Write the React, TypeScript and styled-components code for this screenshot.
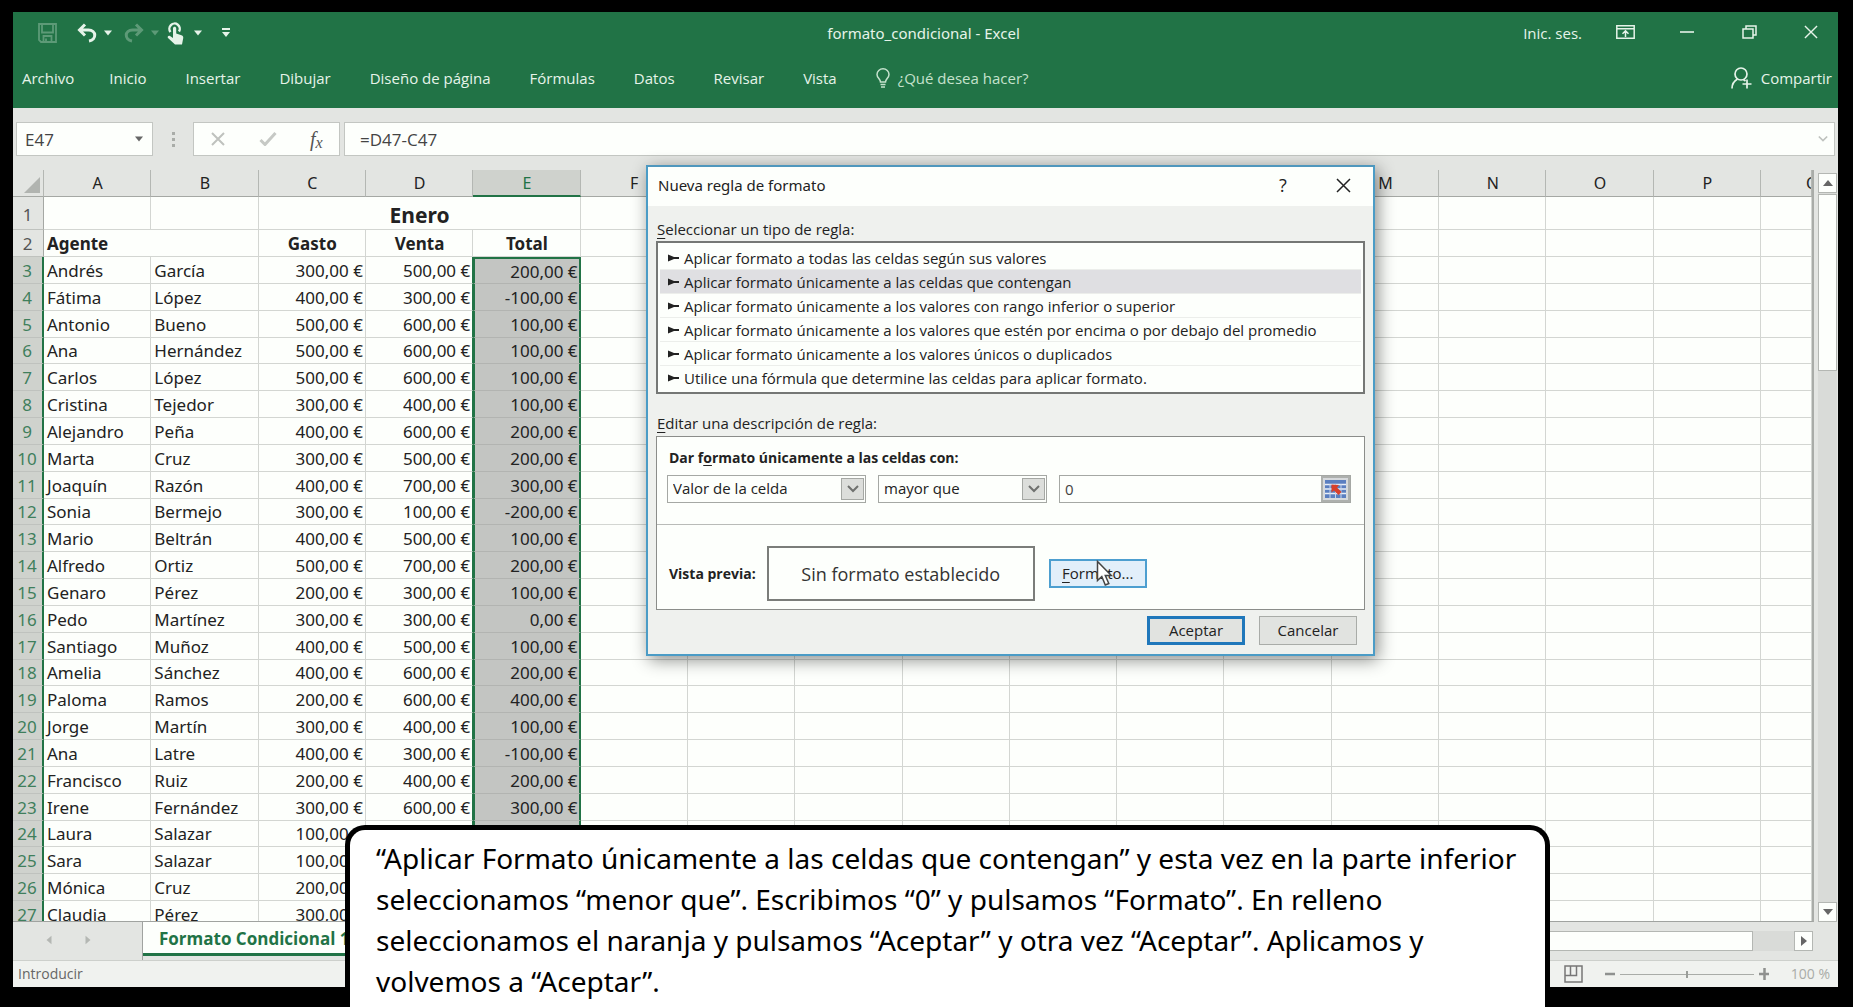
import React from "react";
import styled, { createGlobalStyle, css } from "styled-components";

const GREEN = "#217346";
const CHROME = "#e3e5e2";
const PAPER = "#fdfffc";
const GRID_LINE = "#d3d6d2";
const SANS = `"Open Sans", "Noto Sans", sans-serif`;
const HUMANIST = `"Noto Sans", "Open Sans", sans-serif`;

const GlobalStyle = createGlobalStyle`
  *, *::before, *::after { box-sizing: border-box; }
  body { margin: 0; background: #000; overflow: hidden; }
  button, input, select { font: inherit; color: inherit; margin: 0; }
`;

/* ---------- window ---------- */

const Page = styled.div`
  position: relative;
  height: 100vh;
  padding: 12px 15px 20px 13px;
  background: #000;
  font: 15px/20px ${SANS};
  color: #333;
`;

const Window = styled.main`
  height: 100%;
  display: flex;
  flex-direction: column;
  overflow: hidden;
  background: ${CHROME};
`;

const PlainButton = styled.button`
  display: flex;
  align-items: center;
  justify-content: center;
  padding: 0;
  border: 0;
  background: none;
`;

/* ---------- green header ---------- */

const Header = styled.header`
  flex: none;
  background: ${GREEN};
  color: #e6f3e9;
  padding-bottom: 4px;
`;

const TitleBar = styled.div`
  display: grid;
  grid-template-columns: 1fr auto 1fr;
  align-items: center;
  height: 42px;
`;

const QuickAccess = styled.div`
  display: flex;
  align-items: center;
  padding-left: 25px;
`;

const QuickButton = styled(PlainButton)<{ $faded?: boolean; $gap: number }>`
  height: 24px;
  margin-right: ${(p) => p.$gap}px;
  opacity: ${(p) => (p.$faded ? 0.3 : 1)};
`;

const Title = styled.h1`
  margin: 0;
  padding-right: 4px;
  font-family: ${HUMANIST};
  font-size: 15px;
  font-weight: 400;
`;

const WindowControls = styled.div`
  display: flex;
  justify-content: flex-end;
  align-items: center;
  gap: 8px;
`;

const SignIn = styled(PlainButton)`
  margin-right: 8px;
`;

const ControlButton = styled(PlainButton)`
  width: 54px;
  height: 42px;
  padding-bottom: 2px;
`;

const RibbonBar = styled.nav`
  display: flex;
  align-items: center;
  height: 50px;
  padding: 0 6px 2px 9px;
`;

const Tab = styled(PlainButton)`
  padding: 0 20px 0 19px;
  &:first-child {
    padding: 0 16px 0 0;
  }
`;

const TellMe = styled(PlainButton)`
  padding-left: 19px;
  gap: 8px;
  color: #c5e2cd;
`;

const Share = styled(PlainButton)`
  margin-left: auto;
  gap: 9px;
`;

/* ---------- formula bar ---------- */

const FormulaBar = styled.div`
  flex: none;
  display: flex;
  align-items: center;
  padding: 14px 3px;
  font-size: 17px;
`;

const Framed = styled.div`
  display: flex;
  align-items: center;
  height: 34px;
  background: ${PAPER};
  border: 1px solid #c3c6c2;
`;

const NameBox = styled(Framed)`
  width: 137px;
  padding: 0 8px;
  color: #666;
`;

const BareInput = styled.input`
  flex: 1;
  min-width: 0;
  height: 100%;
  padding: 0;
  border: 0;
  outline: 0;
  background: none;
  color: #444;
`;

const Dots = styled.div`
  width: 40px;
  display: flex;
  flex-direction: column;
  align-items: center;
  gap: 3px;
  &::before,
  &::after,
  span {
    content: "";
    width: 3px;
    height: 3px;
    background: #a9aca8;
  }
`;

const FormulaButtons = styled(Framed)`
  width: 147px;
  margin-right: 4px;
  justify-content: space-around;
`;

const FxButton = styled(PlainButton)`
  font: italic 20px/24px "Liberation Serif", serif;
  color: #555;
  sub {
    font-size: 16px;
    line-height: 12px;
    vertical-align: -2px;
  }
`;

const FormulaField = styled(Framed)`
  flex: 1;
  padding: 0 6px 0 15px;
`;

/* ---------- sheet ---------- */

const SheetArea = styled.div`
  flex: 1;
  min-height: 0;
  display: flex;
`;

const GridViewport = styled.div`
  flex: 1;
  min-width: 0;
  overflow: hidden;
  border-right: 2px solid #a9aca8;
  border-bottom: 1px solid #a0a3a0;
  background: ${PAPER};
`;

const Sheet = styled.table`
  width: 100%;
  table-layout: fixed;
  border-collapse: separate;
  border-spacing: 0;
  font-family: ${HUMANIST};
  font-size: 17px;
  line-height: 24px;
  color: #222;

  th,
  td {
    padding: 0 2px 0 3px;
    overflow: hidden;
    white-space: nowrap;
  }
  tbody th,
  tbody td {
    padding-top: 1px;
  }
  tbody tr {
    height: 27px;
  }
  tbody tr:first-child {
    height: 33px;
  }
  tbody tr:first-child > * {
    padding-top: 3px;
  }
  tbody tr:nth-child(2) > * {
    padding-top: 2px;
  }
  tbody tr:nth-child(6n) {
    height: 26px;
  }
`;

const HeaderCol = styled.col`
  width: 31px;
`;

const ClippedCol = styled.col`
  width: 51px;
`;

const ColumnHead = styled.th<{ $active?: boolean }>`
  height: 27px;
  font-size: 16px;
  font-weight: 400;
  background: ${(p) => (p.$active ? "#cfd2cd" : CHROME)};
  color: ${(p) => (p.$active ? GREEN : "#222")};
  border-right: 1px solid #b4b7b3;
  border-bottom: ${(p) => (p.$active ? `2px solid ${GREEN}` : "1px solid #a5a8a4")};
`;

const ClippedHead = styled(ColumnHead)`
  && {
    padding: 0 0 0 45px;
  }
  text-align: left;
`;

const Corner = styled(ColumnHead)`
  && {
    padding: 0 3px 3px 0;
  }
  vertical-align: bottom;
  line-height: 0;
  text-align: right;
`;

const RowHead = styled.th<{ $active?: boolean }>`
  && {
    padding-left: 0;
    padding-right: 1px;
  }
  font-weight: 400;
  background: ${(p) => (p.$active ? "#cfd2cd" : CHROME)};
  color: ${(p) => (p.$active ? "#3f7f5c" : "#555")};
  border-right: ${(p) => (p.$active ? `2px solid ${GREEN}` : "1px solid #a5a8a4")};
  border-bottom: 1px solid #bfc2be;
`;

const Cell = styled.td<{ $align?: string; $bold?: boolean; $big?: boolean; $edge?: boolean }>`
  text-align: ${(p) => p.$align ?? "left"};
  font-weight: ${(p) => (p.$bold ? 700 : 400)};
  font-size: ${(p) => (p.$big ? 21 : 17)}px;
  border-right: 1px solid ${(p) => (p.$edge ? GREEN : GRID_LINE)};
  border-bottom: 1px solid ${GRID_LINE};
`;

const SelectedCell = styled(Cell)<{ $first?: boolean }>`
  && {
    padding-right: 1px;
    ${(p) =>
      p.$first &&
      css`
        padding-top: 0;
        line-height: 23px;
        border-top: 2px solid ${GREEN};
      `}
  }
  background: #c3c5c2;
  border-left: 2px solid ${GREEN};
  border-right: 2px solid ${GREEN};
  border-bottom-color: #b2b4b1;
`;

const VerticalScroll = styled.div`
  flex: none;
  width: 24px;
  padding: 3px 1px 0 4px;
  display: flex;
  flex-direction: column;
`;

const ScrollButton = styled(PlainButton)`
  flex: none;
  width: 19px;
  height: 20px;
  background: ${PAPER};
  border: 1px solid #b4b7b3;
  color: #666;
`;

const VerticalTrack = styled.div`
  flex: 1;
  padding-top: 1px;
  background: #d9dbd8;
`;

const VerticalThumb = styled.div`
  height: 25%;
  background: ${PAPER};
  border: 1px solid #b4b7b3;
`;

/* ---------- sheet tabs and status ---------- */

const TabStrip = styled.div`
  flex: none;
  display: flex;
  height: 39px;
  border-bottom: 1px solid #cdd0cc;
`;

const TabNav = styled.div`
  width: 130px;
  display: flex;
  align-items: center;
  padding: 0 0 2px 31px;
  gap: 29px;
  color: #b4b7b3;
  border-right: 1px solid #a0a3a0;
`;

const SheetTab = styled(PlainButton)`
  height: 34px;
  padding: 2px 16px 0;
  background: ${PAPER};
  border-bottom: 3px solid ${GREEN};
  color: ${GREEN};
  font-size: 17px;
  font-weight: 700;
`;

const HorizontalScroll = styled.div`
  flex: 1;
  display: flex;
  padding: 9px 25px 9px 600px;
`;

const HorizontalTrack = styled.div`
  flex: 1;
  padding-right: 41px;
  background: #d9dbd8;
`;

const HorizontalThumb = styled.div`
  height: 100%;
  background: ${PAPER};
  border: 1px solid #b4b7b3;
`;

const StatusBar = styled.footer`
  flex: none;
  display: flex;
  align-items: center;
  height: 26px;
  padding: 0 8px 0 5px;
  background: #f0f2ef;
  font-size: 14px;
  color: #666;
`;

const ZoomGroup = styled.div`
  margin-left: auto;
  display: flex;
  align-items: center;
`;

const ViewButton = styled(PlainButton)`
  margin-right: 22px;
`;

const ZoomStep = styled(PlainButton)`
  width: 10px;
`;

const ZoomRange = styled.input`
  appearance: none;
  width: 134px;
  height: 16px;
  margin: 0 5px;
  background: linear-gradient(#a9aca8, #a9aca8) center / 100% 1px no-repeat;
  &::-webkit-slider-thumb {
    appearance: none;
    width: 2px;
    height: 7px;
    background: #9a9d99;
  }
`;

const ZoomValue = styled.span`
  margin-left: 22px;
  color: #a9aca8;
`;

/* ---------- dialog ---------- */

const Dialog = styled.section`
  position: absolute;
  left: 646px;
  top: 165px;
  width: 729px;
  display: flex;
  flex-direction: column;
  background: #eff1ee;
  border: 2px solid #4b9cc6;
  border-top-color: #4f97bd;
  box-shadow: 3px 4px 16px rgba(0, 0, 0, 0.45);
  color: #222;
`;

const DialogTitle = styled.div`
  display: flex;
  align-items: center;
  height: 39px;
  padding: 0 10px 3px 10px;
  background: ${PAPER};
  h2 {
    flex: 1;
    margin: 0;
    font-family: ${HUMANIST};
    font-size: 15px;
    font-weight: 400;
  }
`;

const DialogControl = styled(PlainButton)`
  width: 40px;
  height: 30px;
  margin-left: 20px;
  font-size: 18px;
`;

const DialogBody = styled.div`
  padding: 13px 8px 9px;
`;

const SectionLabel = styled.div`
  padding: 0 1px;
  u {
    text-underline-offset: 3px;
  }
`;

const RuleList = styled.ul`
  list-style: none;
  margin: 2px 0 19px;
  padding: 3px 2px 2px;
  border: 2px solid #757775;
  background: ${PAPER};
`;

const RuleItem = styled.li<{ $selected?: boolean }>`
  display: flex;
  align-items: center;
  gap: 5px;
  height: 24px;
  padding: 0 8px 0 7px;
  border-bottom: 1px solid #eceeeb;
  background: ${(p) => (p.$selected ? "#dfdfe2" : "none")};
  &:last-child {
    border-bottom: 0;
  }
`;

const RulePanel = styled.div`
  margin-top: 3px;
  border: 1px solid #8b8d8a;
  background: ${PAPER};
`;

const Condition = styled.div`
  padding: 11px 13px 21px 10px;
  border-bottom: 1px solid #b9bbb8;
`;

const BoldLine = styled.div`
  padding: 0 2px;
  font-size: 14px;
  font-weight: 700;
  u {
    text-underline-offset: 2px;
  }
`;

const ConditionRow = styled.div`
  display: flex;
  gap: 12px;
  margin-top: 7px;
`;

const SelectBox = styled.div<{ $width: number }>`
  display: grid;
  align-items: center;
  width: ${(p) => p.$width}px;
  height: 28px;
  background: ${PAPER};
  border: 1px solid #a5a8a4;
  select,
  span {
    grid-area: 1 / 1;
  }
`;

const NativeSelect = styled.select`
  appearance: none;
  width: 100%;
  height: 26px;
  padding: 0 28px 2px 5px;
  border: 0;
  outline: 0;
  background: none;
`;

const SelectArrow = styled.span`
  justify-self: end;
  display: flex;
  align-items: center;
  justify-content: center;
  width: 23px;
  height: 22px;
  margin-right: 1px;
  background: #dcdedb;
  border: 1px solid #a5a8a4;
  pointer-events: none;
`;

const ValueBox = styled.div`
  flex: 1;
  display: flex;
  height: 28px;
  padding-left: 5px;
  border: 1px solid #a5a8a4;
  background: ${PAPER};
`;

const PickButton = styled(PlainButton)`
  width: 29px;
  background: #d6d9dc;
  border: 2px solid #adb0ad;
`;

const Preview = styled.div`
  display: flex;
  align-items: center;
  padding: 21px 12px 8px 10px;
`;

const PreviewBox = styled.output`
  display: flex;
  align-items: center;
  justify-content: center;
  width: 268px;
  height: 55px;
  margin: 0 14px 0 9px;
  border: 2px solid #7b7d7a;
  font-size: 18px;
  color: #333;
`;

const DialogButton = styled.button<{ $kind: "hover" | "primary" | "plain" }>`
  width: 98px;
  height: 29px;
  padding: 0 0 2px;
  background: ${(p) => (p.$kind === "hover" ? "#e2effa" : "#e1e3e0")};
  border: ${(p) =>
    ({ hover: "2px solid #4d9fd0", primary: "3px solid #2078bb", plain: "1px solid #a9aca8" })[p.$kind]};
  line-height: 20px;
  u {
    text-underline-offset: 3px;
  }
`;

const HoverSpot = styled.div`
  position: relative;
  display: flex;
`;

const Pointer = styled.svg`
  position: absolute;
  left: 47px;
  top: 1px;
`;

const DialogFooter = styled.div`
  display: flex;
  justify-content: flex-end;
  gap: 14px;
  padding: 6px 8px 0 0;
`;

/* ---------- caption ---------- */

const Caption = styled.p`
  position: absolute;
  left: 345px;
  right: 303px;
  bottom: 0;
  margin: 0;
  padding: 8px 16px 5px 26px;
  border: 5px solid #000;
  border-bottom: 0;
  border-radius: 20px 20px 0 0;
  background: #fff;
  color: #000;
  font-family: ${HUMANIST};
  font-size: 28px;
  line-height: 41px;
`;

/* ---------- icons ---------- */

const Caret = ({ size = 8 }: { size?: number }) => (
  <svg width={size} height="6" viewBox="0 0 8 6">
    <path d="M0 .5h8L4 5.5z" fill="currentColor" />
  </svg>
);

const Triangle = ({ turn, size = 12 }: { turn: number; size?: number }) => (
  <svg width={size} height={size} viewBox="0 0 12 12">
    <path d="M1 9h10L6 3z" fill="currentColor" transform={`rotate(${turn} 6 6)`} />
  </svg>
);

const Chevron = ({ color = "#6f716f", width = 12 }: { color?: string; width?: number }) => (
  <svg width={width} height="8" viewBox="0 0 12 8">
    <path d="M1 1l5 5 5-5" fill="none" stroke={color} strokeWidth="2" />
  </svg>
);

const SaveIcon = () => (
  <svg width="19" height="20" viewBox="0 0 19 20" fill="none" stroke="currentColor" strokeWidth="1.800">
    <path d="M1 1h17v18H3l-2-2zM4 1v8.500h11V1M5.500 19v-6h8v6M8 15.500V19" />
  </svg>
);

const UndoIcon = ({ flip }: { flip?: boolean }) => (
  <svg width="20" height="20" viewBox="0 0 20 20" fill="none" stroke="currentColor" strokeWidth="3">
    <g transform={flip ? "translate(20 0) scale(-1 1)" : undefined}>
      <path d="M8 1.500L2.500 7 8 12.500M3 7h8.500c8 0 8.500 9.500.5 11" />
    </g>
  </svg>
);

const TouchIcon = () => (
  <svg width="17" height="23" viewBox="0 0 17 23">
    <path d="M3.500 10A5.200 5.200 0 1 1 12 9.500" fill="none" stroke="currentColor" strokeWidth="2.400" />
    <path
      d="M6 6.500c0-2.200 3.200-2.200 3.200 0v5l5.300 1.700c1.500.5 2 1.500 1.700 3L15 22.500H8L1 16c-1-1.200.5-2.800 2-2l3 2z"
      fill="currentColor"
    />
  </svg>
);

const CustomizeIcon = () => (
  <svg width="8" height="10" viewBox="0 0 8 10" fill="currentColor">
    <path d="M0 0h8v2H0zM0 4h8L4 9z" />
  </svg>
);

const RibbonDisplayIcon = () => (
  <svg width="19" height="14" viewBox="0 0 19 14" fill="none" stroke="currentColor" strokeWidth="1.500">
    <path d="M.8.8h17.400v12.400H.8zM.8 3.800h17.400M9.500 12V6M6.500 8.800l3-3 3 3" />
  </svg>
);

const MinimizeIcon = () => (
  <svg width="14" height="14" viewBox="0 0 14 14">
    <path d="M0 7h14" stroke="currentColor" strokeWidth="1.600" />
  </svg>
);

const RestoreIcon = () => (
  <svg width="15" height="14" viewBox="0 0 15 14" fill="none" stroke="currentColor" strokeWidth="1.500">
    <path d="M1 4h10v9H1zM4 4V1h10v9h-3" />
  </svg>
);

const CloseIcon = ({ size = 14 }: { size?: number }) => (
  <svg width={size} height={size} viewBox="0 0 15 15">
    <path d="M1 1l13 13M14 1L1 14" stroke="currentColor" strokeWidth="1.500" />
  </svg>
);

const BulbIcon = () => (
  <svg width="14" height="20" viewBox="0 0 14 20" fill="none" stroke="currentColor" strokeWidth="1.500">
    <path d="M4.500 14c0-3-3.500-4-3.500-7.500a6 5.700 0 0 1 12 0c0 3.500-3.500 4.500-3.500 7.500zM4.500 16.500h5M5 19h4" />
  </svg>
);

const ShareIcon = () => (
  <svg width="21" height="22" viewBox="0 0 21 22" fill="none" stroke="currentColor" strokeWidth="1.700">
    <ellipse cx="10" cy="7" rx="6" ry="6" />
    <path d="M1 21.500c0-4.500 2-7.500 5.500-9.500M12.500 12.500l2 1.500M16 12.500v9M11.500 17h9" />
  </svg>
);

const CancelIcon = () => (
  <svg width="16" height="14" viewBox="0 0 16 14">
    <path d="M2 1l12 12M14 1L2 13" stroke="#bfc2be" strokeWidth="2" />
  </svg>
);

const CheckIcon = () => (
  <svg width="18" height="14" viewBox="0 0 18 14">
    <path d="M1.500 8l4.500 4.500L16.500 1" fill="none" stroke="#c6c9c5" strokeWidth="3" />
  </svg>
);

const CornerIcon = () => (
  <svg width="16" height="16" viewBox="0 0 16 16">
    <path d="M16 0v16H0z" fill="#b1b4b0" />
  </svg>
);

const BulletIcon = () => (
  <svg width="12" height="8" viewBox="0 0 12 8">
    <path d="M1 .5l6 2.500h5v2H7L1 7.500z" fill="#222" />
  </svg>
);

const PickIcon = () => (
  <svg width="21" height="18" viewBox="0 0 21 18">
    <path d="M0 0h21v18H0z" fill="#5b7fc0" />
    <path d="M0 4.500h21M0 9h21M0 13.500h21" stroke="#e9eff8" strokeWidth="1.600" />
    <path d="M5 4v14M10.500 4v14M16 4v14" stroke="#c9d6ec" strokeWidth="1" />
    <path d="M6.500 4.500l7.500.5-2 2.500 4.500 4.500-3 3L9 10.500 6.500 12.500z" fill="#d8402c" />
  </svg>
);

const PageViewIcon = () => (
  <svg width="19" height="18" viewBox="0 0 19 18" fill="none" stroke="#777" strokeWidth="1.500">
    <path d="M1 1h17v16H1zM1 10.500h11.500V1M6.500 1v9.500" />
  </svg>
);

/* ---------- data ---------- */

const COLUMNS = "ABCDEFGHIJKLMNOP".split("");
const TABS = [
  "Archivo",
  "Inicio",
  "Insertar",
  "Dibujar",
  "Diseño de página",
  "Fórmulas",
  "Datos",
  "Revisar",
  "Vista",
];

type Row = [string, string, number, number?, number?];

const ROWS: Row[] = [
  ["Andrés", "García", 300, 500, 200],
  ["Fátima", "López", 400, 300, -100],
  ["Antonio", "Bueno", 500, 600, 100],
  ["Ana", "Hernández", 500, 600, 100],
  ["Carlos", "López", 500, 600, 100],
  ["Cristina", "Tejedor", 300, 400, 100],
  ["Alejandro", "Peña", 400, 600, 200],
  ["Marta", "Cruz", 300, 500, 200],
  ["Joaquín", "Razón", 400, 700, 300],
  ["Sonia", "Bermejo", 300, 100, -200],
  ["Mario", "Beltrán", 400, 500, 100],
  ["Alfredo", "Ortiz", 500, 700, 200],
  ["Genaro", "Pérez", 200, 300, 100],
  ["Pedo", "Martínez", 300, 300, 0],
  ["Santiago", "Muñoz", 400, 500, 100],
  ["Amelia", "Sánchez", 400, 600, 200],
  ["Paloma", "Ramos", 200, 600, 400],
  ["Jorge", "Martín", 300, 400, 100],
  ["Ana", "Latre", 400, 300, -100],
  ["Francisco", "Ruiz", 200, 400, 200],
  ["Irene", "Fernández", 300, 600, 300],
  ["Laura", "Salazar", 100],
  ["Sara", "Salazar", 100],
  ["Mónica", "Cruz", 200],
  ["Claudia", "Pérez", 300],
];

const RULES = [
  "Aplicar formato a todas las celdas según sus valores",
  "Aplicar formato únicamente a las celdas que contengan",
  "Aplicar formato únicamente a los valores con rango inferior o superior",
  "Aplicar formato únicamente a los valores que estén por encima o por debajo del promedio",
  "Aplicar formato únicamente a los valores únicos o duplicados",
  "Utilice una fórmula que determine las celdas para aplicar formato.",
];

const euro = (value?: number) => (value === undefined ? "" : `${value},00 €`);

const EmptyCells = () => (
  <>
    {COLUMNS.slice(5).map((c) => (
      <Cell key={c} />
    ))}
    <Cell />
  </>
);

/* ---------- parts ---------- */

const ExcelHeader = () => (
  <Header>
    <TitleBar>
      <QuickAccess>
        <QuickButton $faded $gap={20} aria-label="Guardar"><SaveIcon /></QuickButton>
        <QuickButton $gap={7} aria-label="Deshacer"><UndoIcon /></QuickButton>
        <QuickButton $gap={12} aria-label="Opciones de deshacer"><Caret /></QuickButton>
        <QuickButton $faded $gap={7} aria-label="Rehacer"><UndoIcon flip /></QuickButton>
        <QuickButton $faded $gap={8} aria-label="Opciones de rehacer"><Caret /></QuickButton>
        <QuickButton $gap={10} aria-label="Modo táctil"><TouchIcon /></QuickButton>
        <QuickButton $gap={20} aria-label="Opciones de modo táctil"><Caret /></QuickButton>
        <QuickButton $gap={0} aria-label="Personalizar"><CustomizeIcon /></QuickButton>
      </QuickAccess>
      <Title>formato_condicional - Excel</Title>
      <WindowControls>
        <SignIn>Inic. ses.</SignIn>
        <ControlButton aria-label="Opciones de la cinta"><RibbonDisplayIcon /></ControlButton>
        <ControlButton aria-label="Minimizar"><MinimizeIcon /></ControlButton>
        <ControlButton aria-label="Restaurar"><RestoreIcon /></ControlButton>
        <ControlButton aria-label="Cerrar"><CloseIcon /></ControlButton>
      </WindowControls>
    </TitleBar>
    <RibbonBar>
      {TABS.map((t) => (
        <Tab key={t}>{t}</Tab>
      ))}
      <TellMe><BulbIcon />¿Qué desea hacer?</TellMe>
      <Share><ShareIcon />Compartir</Share>
    </RibbonBar>
  </Header>
);

const Formula = () => (
  <FormulaBar>
    <NameBox>
      <BareInput aria-label="Cuadro de nombres" defaultValue="E47" />
      <Caret size={10} />
    </NameBox>
    <Dots><span /></Dots>
    <FormulaButtons>
      <PlainButton aria-label="Cancelar"><CancelIcon /></PlainButton>
      <PlainButton aria-label="Introducir"><CheckIcon /></PlainButton>
      <FxButton aria-label="Insertar función"><span>f<sub>x</sub></span></FxButton>
    </FormulaButtons>
    <FormulaField>
      <BareInput aria-label="Barra de fórmulas" defaultValue="=D47-C47" />
      <Chevron color="#bfc2be" width={10} />
    </FormulaField>
  </FormulaBar>
);

const Grid = () => (
  <Sheet>
    <colgroup>
      <HeaderCol />
      {COLUMNS.map((c) => (
        <col key={c} />
      ))}
      <ClippedCol />
    </colgroup>
    <thead>
      <tr>
        <Corner><CornerIcon /></Corner>
        {COLUMNS.map((c) => (
          <ColumnHead key={c} $active={c === "E"}>{c}</ColumnHead>
        ))}
        <ClippedHead>Q</ClippedHead>
      </tr>
    </thead>
    <tbody>
      <tr>
        <RowHead>1</RowHead>
        <Cell />
        <Cell />
        <Cell colSpan={3} $align="center" $bold $big>Enero</Cell>
        <EmptyCells />
      </tr>
      <tr>
        <RowHead>2</RowHead>
        <Cell colSpan={2} $bold>Agente</Cell>
        <Cell $align="center" $bold>Gasto</Cell>
        <Cell $align="center" $bold>Venta</Cell>
        <Cell $align="center" $bold>Total</Cell>
        <EmptyCells />
      </tr>
      {ROWS.map(([name, surname, spent, sold, total], i) => (
        <tr key={i}>
          <RowHead $active>{i + 3}</RowHead>
          <Cell>{name}</Cell>
          <Cell>{surname}</Cell>
          <Cell $align="right">{euro(spent)}</Cell>
          <Cell $align="right" $edge>{euro(sold)}</Cell>
          <SelectedCell $align="right" $first={i === 0}>{euro(total)}</SelectedCell>
          <EmptyCells />
        </tr>
      ))}
    </tbody>
  </Sheet>
);

const RuleDialog = () => (
  <Dialog role="dialog" aria-labelledby="rule-title">
    <DialogTitle>
      <h2 id="rule-title">Nueva regla de formato</h2>
      <DialogControl>?</DialogControl>
      <DialogControl aria-label="Cerrar"><CloseIcon size={15} /></DialogControl>
    </DialogTitle>
    <DialogBody>
      <SectionLabel id="rule-type"><u>S</u>eleccionar un tipo de regla:</SectionLabel>
      <RuleList role="listbox" aria-labelledby="rule-type">
        {RULES.map((r, i) => (
          <RuleItem key={r} role="option" aria-selected={i === 1} $selected={i === 1}>
            <BulletIcon />
            {r}
          </RuleItem>
        ))}
      </RuleList>
      <SectionLabel><u>E</u>ditar una descripción de regla:</SectionLabel>
      <RulePanel>
        <Condition>
          <BoldLine>Dar f<u>o</u>rmato únicamente a las celdas con:</BoldLine>
          <ConditionRow>
            <SelectBox $width={199}>
              <NativeSelect aria-label="Tipo de valor"><option>Valor de la celda</option></NativeSelect>
              <SelectArrow><Chevron /></SelectArrow>
            </SelectBox>
            <SelectBox $width={169}>
              <NativeSelect aria-label="Comparación"><option>mayor que</option></NativeSelect>
              <SelectArrow><Chevron /></SelectArrow>
            </SelectBox>
            <ValueBox>
              <BareInput aria-label="Valor" defaultValue="0" />
              <PickButton aria-label="Seleccionar celda"><PickIcon /></PickButton>
            </ValueBox>
          </ConditionRow>
        </Condition>
        <Preview>
          <BoldLine>Vista previa:</BoldLine>
          <PreviewBox>Sin formato establecido</PreviewBox>
          <HoverSpot>
            <DialogButton $kind="hover"><u>F</u>ormato...</DialogButton>
            <Pointer width="18" height="27" viewBox="0 0 18 27">
              <path
                d="M1.500 1.500v19l4.300-4 3.500 8.500 3.500-1.500-3.500-8h6z"
                fill="#fff"
                stroke="#444"
                strokeWidth="1.500"
              />
            </Pointer>
          </HoverSpot>
        </Preview>
      </RulePanel>
      <DialogFooter>
        <DialogButton $kind="primary">Aceptar</DialogButton>
        <DialogButton $kind="plain">Cancelar</DialogButton>
      </DialogFooter>
    </DialogBody>
  </Dialog>
);

export default function App() {
  return (
    <Page>
      <GlobalStyle />
      <Window>
        <ExcelHeader />
        <Formula />
        <SheetArea>
          <GridViewport><Grid /></GridViewport>
          <VerticalScroll>
            <ScrollButton aria-label="Subir"><Triangle turn={0} /></ScrollButton>
            <VerticalTrack><VerticalThumb /></VerticalTrack>
            <ScrollButton aria-label="Bajar"><Triangle turn={180} /></ScrollButton>
          </VerticalScroll>
        </SheetArea>
        <TabStrip>
          <TabNav>
            <Triangle turn={270} size={10} />
            <Triangle turn={90} size={10} />
          </TabNav>
          <SheetTab>Formato Condicional 1</SheetTab>
          <HorizontalScroll>
            <HorizontalTrack><HorizontalThumb /></HorizontalTrack>
            <ScrollButton aria-label="Derecha"><Triangle turn={90} /></ScrollButton>
          </HorizontalScroll>
        </TabStrip>
        <StatusBar>
          Introducir
          <ZoomGroup>
            <ViewButton aria-label="Diseño de página"><PageViewIcon /></ViewButton>
            <ZoomStep aria-label="Alejar">
              <svg width="10" height="12"><path d="M0 6h10" stroke="#8f918f" strokeWidth="2.500" /></svg>
            </ZoomStep>
            <ZoomRange type="range" aria-label="Zoom" min={10} max={190} defaultValue={100} />
            <ZoomStep aria-label="Acercar">
              <svg width="12" height="12"><path d="M0 6h11M5.500 0v12" stroke="#8f918f" strokeWidth="2.500" /></svg>
            </ZoomStep>
            <ZoomValue>100 %</ZoomValue>
          </ZoomGroup>
        </StatusBar>
      </Window>
      <RuleDialog />
      <Caption>
        “Aplicar Formato únicamente a las celdas que contengan” y esta vez en la parte inferior
        seleccionamos “menor que”. Escribimos “0” y pulsamos “Formato”. En relleno seleccionamos el
        naranja y pulsamos “Aceptar” y otra vez “Aceptar”. Aplicamos y volvemos a “Aceptar”.
      </Caption>
    </Page>
  );
}
